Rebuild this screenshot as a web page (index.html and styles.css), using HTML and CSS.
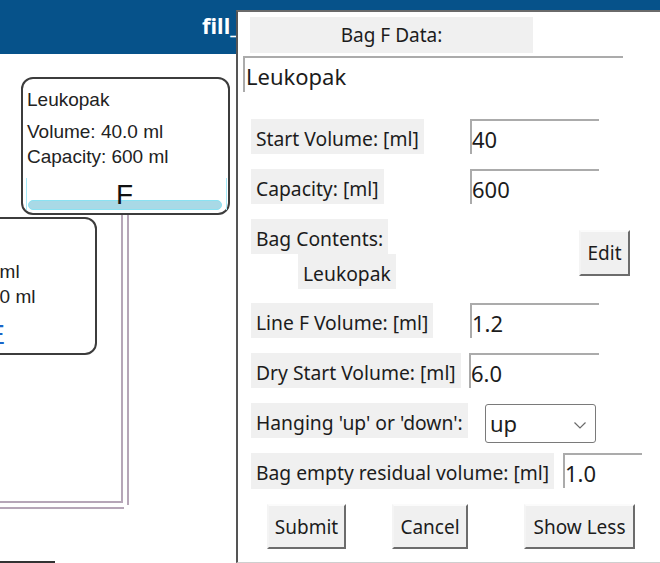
FILE: index.html
```html
<!DOCTYPE html>
<html>
<head>
<meta charset="utf-8">
<title>Bag F Data</title>
<link rel="stylesheet" href="styles.css">
</head>
<body>
<header class="titlebar"><span class="titlebar-text">fill_</span></header>

<div class="canvas">
  <svg class="wires" width="236" height="509" viewBox="0 0 236 509">
    <polyline points="122,161 122,448 0,448" />
    <polyline points="128,161 128,451" />
    <polyline points="0,454 124,454" />
  </svg>

  <div class="node node-e">
    <div class="node-line">&nbsp;</div>
    <div class="node-line second">Volume: 0.0 ml</div>
    <div class="node-line third">Capacity: 600 ml</div>
    <div class="tank tank-empty">
      <span class="tank-label label-e">E</span>
    </div>
  </div>

  <div class="node node-f">
    <div class="node-line">Leukopak</div>
    <div class="node-line second">Volume: 40.0 ml</div>
    <div class="node-line third">Capacity: 600 ml</div>
    <div class="tank">
      <div class="liquid"></div>
      <span class="tank-label">F</span>
    </div>
  </div>

  <div class="floor-edge"></div>
</div>

<div class="dialog">
  <div class="dlg-title">Bag F Data:</div>
  <div class="name-entry">Leukopak</div>

  <div class="form">
    <div class="row row-a">
      <span class="label">Start Volume: [ml]</span>
      <div class="entry">40</div>
    </div>
    <div class="row row-a">
      <span class="label">Capacity: [ml]</span>
      <div class="entry">600</div>
    </div>
    <div class="contents">
      <div class="contents-labels">
        <span class="label">Bag Contents:</span>
        <span class="label indent">Leukopak</span>
      </div>
      <button class="btn btn-edit">Edit</button>
    </div>
    <div class="row row-a">
      <span class="label">Line F Volume: [ml]</span>
      <div class="entry">1.2</div>
    </div>
    <div class="row row-dry">
      <span class="label">Dry Start Volume: [ml]</span>
      <div class="entry">6.0</div>
    </div>
    <div class="row row-hang">
      <span class="label">Hanging 'up' or 'down':</span>
      <div class="combo">
        <span class="combo-value">up</span>
        <svg class="chevron" width="12" height="7" viewBox="0 0 12 7"><polyline points="0.5,0.5 6,6 11.5,0.5" /></svg>
      </div>
    </div>
    <div class="row row-resid">
      <span class="label">Bag empty residual volume: [ml]</span>
      <div class="entry">1.0</div>
    </div>
    <div class="actions">
      <button class="btn btn-submit">Submit</button>
      <button class="btn btn-cancel">Cancel</button>
      <button class="btn btn-less">Show Less</button>
    </div>
  </div>
</div>
</body>
</html>
```

FILE: styles.css
```css
* { box-sizing: border-box; }

html, body { margin: 0; padding: 0; }

body {
  width: 660px;
  height: 563px;
  overflow: hidden;
  position: relative;
  background: #ffffff;
  font-family: "Noto Sans", "Open Sans", sans-serif;
  color: #1c1c1c;
}

/* ---------- title bar ---------- */
.titlebar {
  height: 54px;
  background: #06528a;
  padding-left: 202px;
}
.titlebar-text {
  color: #ffffff;
  font-weight: bold;
  font-size: 22px;
  line-height: 50px;
}

/* ---------- diagram canvas ---------- */
.canvas {
  position: relative;
  height: 509px;
}
.wires {
  position: absolute;
  left: 0;
  top: 0;
}
.wires polyline {
  fill: none;
  stroke: #b6a6b8;
  stroke-width: 2;
}

.node {
  position: absolute;
  width: 209px;
  height: 138px;
  border: 2px solid #3c3c3c;
  border-radius: 12px;
  background: #ffffff;
  padding: 10px 0 0 4px;
  display: flex;
  flex-direction: column;
  font-family: "Liberation Sans", Arial, sans-serif;
  font-size: 19px;
  color: #222222;
}
.node-f { left: 21px; top: 23px; }
.node-e { left: -112px; top: 163px; }

.node-line {
  line-height: 21px;
  white-space: nowrap;
}
.node-line.second { margin-top: 11px; }
.node-line.third { margin-top: 4px; }

.tank {
  position: relative;
  margin: 11px 0 0 -1px;
  width: 201px;
  height: 32px;
  border-left: 1px solid #a6eaf8;
  border-right: 1px solid #a6eaf8;
}
.tank-empty { border-color: transparent; }

.liquid {
  position: absolute;
  left: 1px;
  right: 4px;
  bottom: 0;
  height: 10px;
  background: #a9d9e6;
  border: 1px solid #8ae2f2;
  border-radius: 5px;
}
.tank-label {
  position: relative;
  display: block;
  text-align: center;
  font-size: 28px;
  line-height: 28px;
  padding-top: 3px;
  padding-right: 4px;
  color: #111111;
}
.tank-label.label-e {
  padding-right: 0;
  padding-left: 4px;
  color: #1a66c8;
}

.floor-edge {
  position: absolute;
  left: 0;
  top: 507px;
  width: 55px;
  height: 2px;
  background: #333333;
}

/* ---------- dialog ---------- */
.dialog {
  position: absolute;
  left: 236px;
  top: 10px;
  width: 440px;
  height: 553px;
  background: #ffffff;
  border-left: 2px solid #555555;
  border-top: 2px solid #6a6a6a;
  border-bottom: 1px solid #cfcfcf;
  display: flex;
  flex-direction: column;
  align-items: flex-start;
}

.dlg-title {
  margin: 5px 0 0 12px;
  width: 283px;
  height: 36px;
  background: #f0f0f0;
  text-align: center;
  font-size: 19px;
  line-height: 36px;
}

.name-entry {
  margin: 3px 0 0 5px;
  width: 380px;
  height: 36px;
  border-top: 2px solid #ababab;
  border-left: 2px solid #ababab;
  padding: 1px 0 0 1px;
  font-size: 22px;
  line-height: 34px;
  white-space: nowrap;
}

.form {
  margin: 27px 0 0 13px;
  display: flex;
  flex-direction: column;
  gap: 15px;
}

.row {
  display: grid;
  align-items: start;
  height: 35px;
}
.row .label { justify-self: start; }
.row-a { grid-template-columns: 219px 129px; }
.row-dry { grid-template-columns: 218px 130px; }
.row-hang { grid-template-columns: 234px 111px; }
.row-resid { grid-template-columns: 312px 79px; height: 36px; }

.label {
  display: block;
  height: 35px;
  padding: 6px 5px 0;
  background: #f0f0f0;
  font-size: 19.3px;
  line-height: 27px;
  white-space: nowrap;
}
.row-resid .label { height: 36px; }

.entry {
  height: 35px;
  border-top: 2px solid #ababab;
  border-left: 2px solid #ababab;
  padding: 3px 0 0 0;
  font-size: 22px;
  line-height: 30px;
  white-space: nowrap;
}

.combo {
  margin-top: 1px;
  height: 39px;
  border: 1px solid #7a7a7a;
  border-radius: 3px;
  padding: 3px 9px 0 4px;
  display: flex;
  justify-content: space-between;
  align-items: flex-start;
  background: #ffffff;
}
.combo-value {
  font-size: 22px;
  line-height: 30px;
}
.chevron {
  margin-top: 14px;
}
.chevron polyline {
  fill: none;
  stroke: #6a6a6a;
  stroke-width: 1.2;
}

.contents {
  display: grid;
  grid-template-columns: 328px 51px;
  align-items: center;
  margin-bottom: -1px;
}
.contents-labels {
  display: flex;
  flex-direction: column;
  align-items: flex-start;
}
.label.indent { margin-left: 47px; }

.btn {
  font-family: "Noto Sans", "Open Sans", sans-serif;
  font-size: 19px;
  color: #1c1c1c;
  background: #f0f0f0;
  border: 2px solid;
  border-color: #fbfbfb #6c6c6c #6c6c6c #f4f4f4;
  padding: 0;
  display: flex;
  align-items: center;
  justify-content: center;
  line-height: 26px;
}
.btn-edit { width: 51px; height: 46px; margin-top: -2px; }

.actions {
  display: flex;
  align-items: flex-start;
}
.btn-submit { margin-left: 16px; width: 79px; height: 45px; }
.btn-cancel { margin-left: 46px; width: 76px; height: 45px; }
.btn-less { margin-left: 56px; width: 111px; height: 45px; }
```
